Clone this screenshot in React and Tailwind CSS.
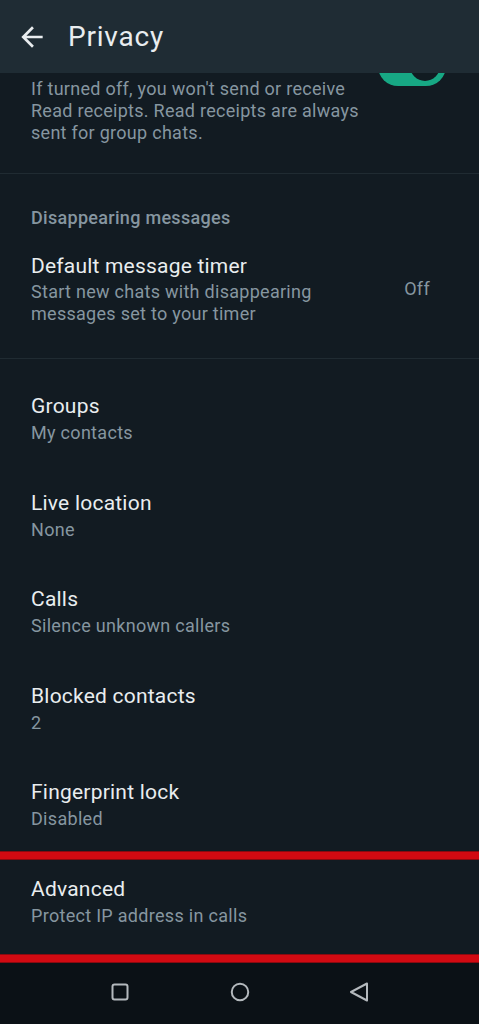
import React from "react";

const rows = [
  ["Groups", "My contacts"],
  ["Live location", "None"],
  ["Calls", "Silence unknown callers"],
  ["Blocked contacts", "2"],
];

function Row({ title, sub, last }) {
  return (
    <div className={`pl-[31px] pr-[31px] pt-[23px] ${last ? "pb-[21px]" : "pb-[22.5px]"}`}>
      <div className="text-[21px] leading-[26px] tracking-[0.22px] text-[#e9edef]">{title}</div>
      <div className="mt-[3px] text-[18px] leading-[22px] tracking-[0.3px] text-[#8696a0]">{sub}</div>
    </div>
  );
}

export default function App() {
  return (
    <div
      className="w-[479px] h-[1024px] bg-[#121b22] flex flex-col overflow-hidden"
      style={{ fontFamily: "Roboto, 'Noto Sans', sans-serif" }}
    >
      {/* Header */}
      <div className="h-[73px] shrink-0 bg-[#1f2c34] flex items-center">
        <svg className="ml-[16px] w-[32px] h-[32px]" viewBox="0 0 24 24" fill="#e9edef">
          <path d="M20 11H7.83l5.59-5.59L12 4l-8 8 8 8 1.41-1.41L7.83 13H20v-2z" />
        </svg>
        <div className="ml-[20px] text-[28px] leading-[34px] tracking-[0.8px] text-[#e9edef]">Privacy</div>
      </div>

      {/* Read receipts section (scrolled) */}
      <div className="relative overflow-hidden h-[101px] shrink-0 border-b border-[#202b32] pt-[4.5px] pl-[31px]">
        <div className="w-[340px] text-[18px] leading-[22px] tracking-[0.28px] text-[#8696a0]">
          If turned off, you won't send or receive Read receipts. Read receipts are always sent for group chats.
        </div>
        <div className="absolute right-[33px] top-[-27px] w-[68px] h-[40px] rounded-full bg-[#17a884]">
          <div className="absolute right-[6px] top-[5px] w-[30px] h-[30px] rounded-full bg-[#111b21]" />
        </div>
      </div>

      {/* Disappearing messages */}
      <div className="shrink-0 h-[185px] border-b border-[#202b32] pt-[32.5px] pl-[31px] pr-[49px]">
        <div className="text-[18px] leading-[22px] font-medium tracking-[0.3px] text-[#8696a0]">Disappearing messages</div>
        <div className="mt-[24.25px] flex items-center justify-between">
          <div>
            <div className="text-[21px] leading-[26px] tracking-[0.2px] text-[#e9edef]">Default message timer</div>
            <div className="mt-[2.5px] w-[310px] text-[18px] leading-[22px] tracking-[0.28px] text-[#8696a0]">
              Start new chats with disappearing messages set to your timer
            </div>
          </div>
          <div className="text-[18px] leading-[22px] tracking-[0.3px] text-[#8696a0]">Off</div>
        </div>
      </div>

      {/* List */}
      <div className="shrink-0 pt-[11px]">
        {rows.map(([t, s]) => (
          <Row key={t} title={t} sub={s} />
        ))}
        <Row title="Fingerprint lock" sub="Disabled" last />
      </div>

      <div className="shrink-0 h-[9px] bg-[#d20a12] border-y border-[#8a0a10]" />
      <div className="shrink-0 pl-[31px] pt-[16px] pb-[27px]">
        <div className="text-[21px] leading-[26px] tracking-[0.22px] text-[#e9edef]">Advanced</div>
        <div className="mt-[3px] text-[18px] leading-[22px] tracking-[0.3px] text-[#8696a0]">Protect IP address in calls</div>
      </div>
      <div className="shrink-0 h-[9px] bg-[#d20a12] border-y border-[#8a0a10]" />

      {/* Nav bar */}
      <div className="flex-1 bg-[#0b1116] flex items-center justify-center gap-[95.5px] pb-[3px]">
        <svg className="w-[24px] h-[24px]" viewBox="0 0 24 24" fill="none" stroke="#b4b9bd" strokeWidth="2">
          <rect x="4.5" y="4.5" width="15" height="15" rx="2" />
        </svg>
        <svg className="w-[24px] h-[24px]" viewBox="0 0 24 24" fill="none" stroke="#b4b9bd" strokeWidth="2">
          <circle cx="12" cy="12" r="8.25" />
        </svg>
        <svg className="w-[24px] h-[24px]" viewBox="0 0 24 24" fill="none" stroke="#b4b9bd" strokeWidth="2" strokeLinejoin="round">
          <path d="M20 3.5 L4 12 L20 20.5 Z" />
        </svg>
      </div>
    </div>
  );
}
